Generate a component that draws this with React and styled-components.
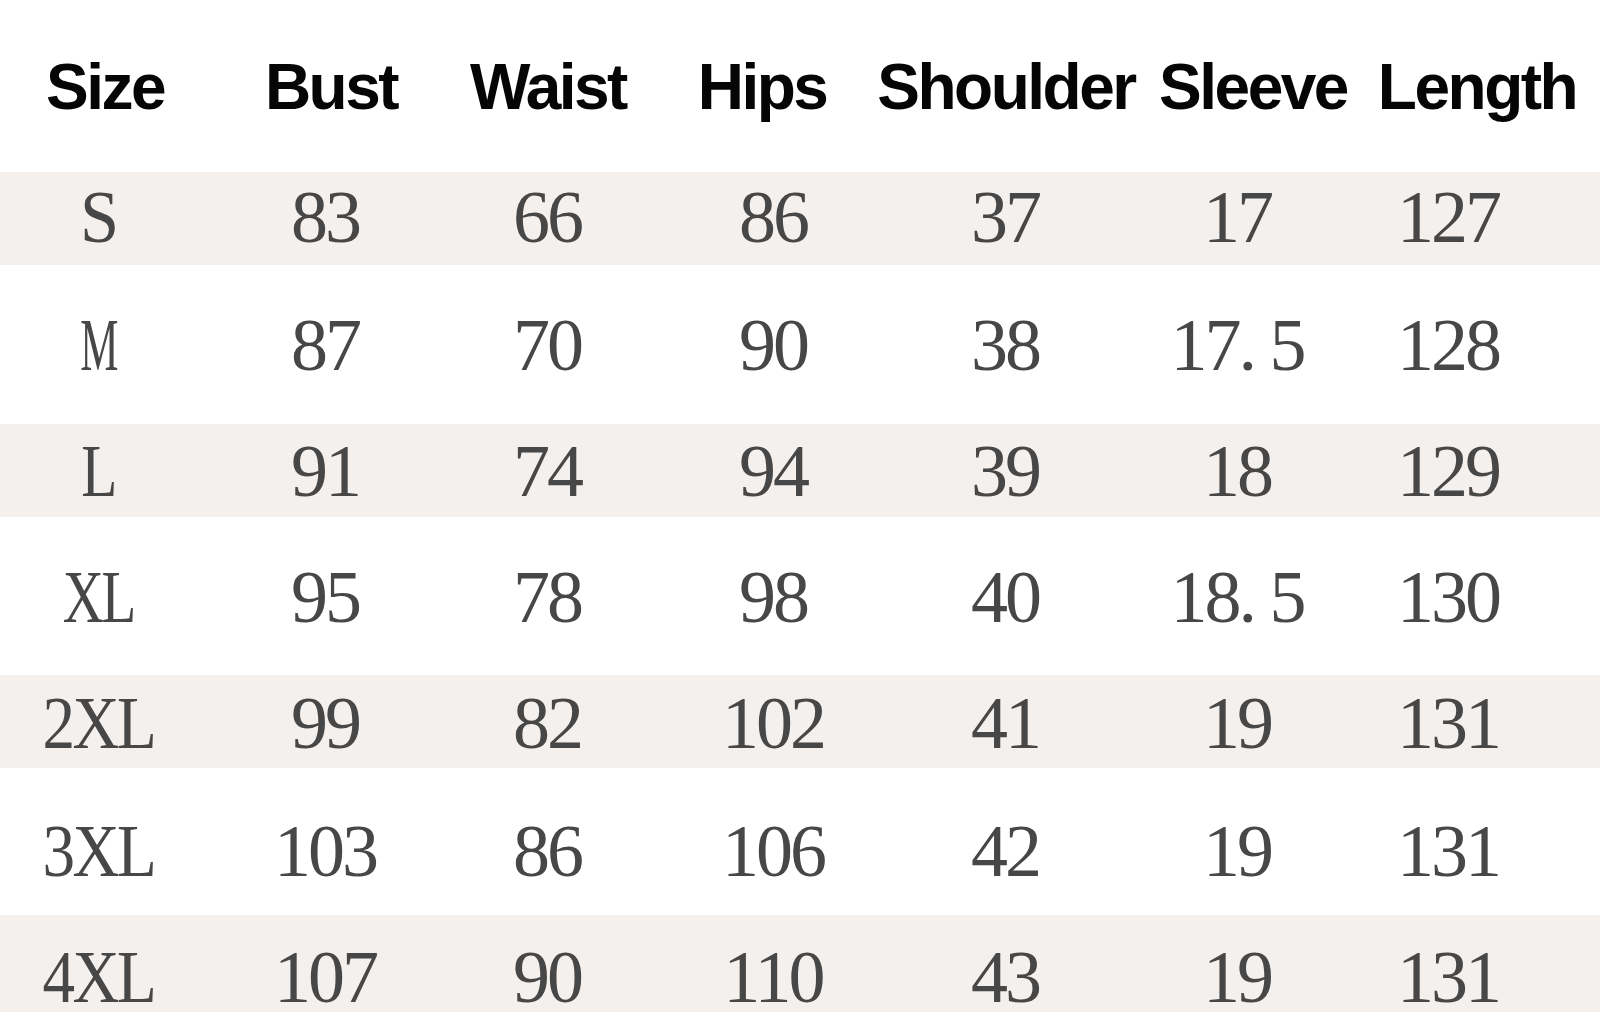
import React from 'react'
import styled, { createGlobalStyle } from 'styled-components'

const GlobalStyle = createGlobalStyle`
  html, body {
    margin: 0;
    padding: 0;
    background: #ffffff;
  }
  body {
    width: 1600px;
    height: 1033px;
    overflow: hidden;
  }
`

// header and body columns are not perfectly aligned in the chart, so each gets its own track list
const HEADER_COLS = '210px 242px 192px 236px 252px 242px 206px'
const BODY_COLS = '196px 258px 186px 266px 198px 266px 156px'

const Chart = styled.div`
  display: flex;
  flex-direction: column;
  width: 1600px;
  height: 1033px;
  background: #ffffff;
`

const HeaderRow = styled.div`
  display: grid;
  grid-template-columns: ${HEADER_COLS};
  align-items: start;
  height: 172px;
  padding-top: 55px;
  box-sizing: border-box;
`

const HeadCell = styled.div`
  display: flex;
  justify-content: center;
  white-space: nowrap;
  font-family: "Liberation Sans", Arial, sans-serif;
  font-weight: 700;
  font-size: 64px;
  line-height: 64px;
  letter-spacing: -2.5px;
  color: #050505;
`

const Row = styled.div`
  display: grid;
  grid-template-columns: ${BODY_COLS};
  align-items: center;
  box-sizing: border-box;
  height: ${props => props.h}px;
  padding-top: ${props => (props.offset > 0 ? props.offset * 2 : 0)}px;
  padding-bottom: ${props => (props.offset < 0 ? -props.offset * 2 : 0)}px;
  background: ${props => (props.shaded ? '#f4f0ed' : '#ffffff')};
`

const Cell = styled.div`
  display: flex;
  justify-content: center;
  white-space: pre;
  font-family: "Liberation Serif", "Times New Roman", serif;
  font-size: 74px;
  line-height: 74px;
  letter-spacing: -3px;
  color: #474747;
`

const Label = styled.span`
  display: inline-block;
  transform: scaleX(${props => props.squeeze});
`

const Footer = styled.div`
  flex: 1;
  background: #ffffff;
`

const headers = ['Size', 'Bust', 'Waist', 'Hips', 'Shoulder', 'Sleeve', 'Length']

const squeezeFor = { S: 0.95, M: 0.58, L: 0.8, XL: 0.77, '2XL': 0.88, '3XL': 0.88, '4XL': 0.88 }

// h = row height, offset = how far the text sits below the middle of the row
const rows = [
  { h: 93, offset: -1.5, shaded: true, values: ['S', '83', '66', '86', '37', '17', '127'] },
  { h: 159, offset: 0, shaded: false, values: ['M', '87', '70', '90', '38', '17. 5', '128'] },
  { h: 93, offset: 0, shaded: true, values: ['L', '91', '74', '94', '39', '18', '129'] },
  { h: 158, offset: 1, shaded: false, values: ['XL', '95', '78', '98', '40', '18. 5', '130'] },
  { h: 93, offset: 1.5, shaded: true, values: ['2XL', '99', '82', '102', '41', '19', '131'] },
  { h: 147, offset: 9.5, shaded: false, values: ['3XL', '103', '86', '106', '42', '19', '131'] },
  { h: 97, offset: 12.5, shaded: true, values: ['4XL', '107', '90', '110', '43', '19', '131'] },
]

function App() {
  return (
    <>
      <GlobalStyle />
      <Chart>
        <HeaderRow>
          {headers.map(h => (
            <HeadCell key={h}>{h}</HeadCell>
          ))}
        </HeaderRow>
        {rows.map(row => (
          <Row key={row.values[0]} h={row.h} offset={row.offset} shaded={row.shaded}>
            {row.values.map((v, i) => (
              <Cell key={i}>
                {i === 0 ? <Label squeeze={squeezeFor[v]}>{v}</Label> : v}
              </Cell>
            ))}
          </Row>
        ))}
        <Footer />
      </Chart>
    </>
  )
}

export default App
